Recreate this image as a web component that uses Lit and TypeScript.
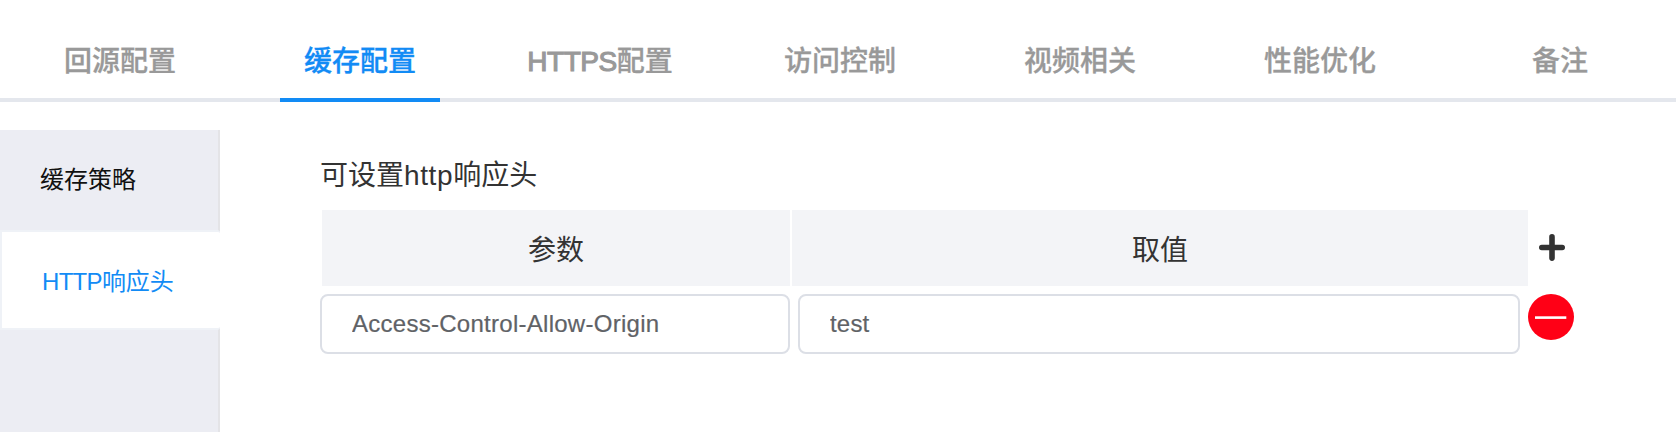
import { LitElement, html, css } from "lit";
import { customElement, state } from "lit/decorators.js";
import { classMap } from "lit/directives/class-map.js";

@customElement("app-root")
export class AppRoot extends LitElement {
  @state() private tab = 1;
  @state() private section = 1;

  private tabs = ["回源配置", "缓存配置", "HTTPS配置", "访问控制", "视频相关", "性能优化", "备注"];
  private sections = ["缓存策略", "HTTP响应头"];

  static styles = css`
    :host {
      display: block;
      height: 432px;
      overflow: hidden;
      background: #fff;
      font-family: "Liberation Sans", "Noto Sans CJK SC", sans-serif;
      color: #333;
    }
    * { box-sizing: border-box; }
    .tabs {
      display: flex;
      height: 102px;
      overflow: hidden;
      box-shadow: inset 0 -4px #e4e7ed;
    }
    .tab {
      flex: 0 0 240px;
      display: flex;
      flex-direction: column;
      align-items: center;
      padding-top: 42px;
      font-size: 28px;
      line-height: 40px;
      font-weight: 500;
      color: #999;
      white-space: nowrap;
      -webkit-text-stroke: 0.3px currentColor;
    }
    .latin { font-weight: 400; letter-spacing: -0.5px; -webkit-text-stroke: 1.1px currentColor; }
    .tab.active { color: #128bf5; }
    .tab.active::after {
      content: "";
      width: 160px;
      height: 4px;
      margin-top: 16px;
      background: #128bf5;
    }
    .body { display: flex; height: 330px; padding-top: 28px; }
    .side {
      width: 220px;
      background: linear-gradient(#e4e4e7, #e4e4e7) right / 2px 100% no-repeat #ecedf3;
    }
    .item {
      height: 100px;
      padding: 0 40px;
      font-size: 24px;
      line-height: 100px;
      color: #111;
      white-space: nowrap;
    }
    .item.active {
      border: 2px solid #eff2f7;
      border-right: 0;
      border-radius: 0 3px 3px 0;
      background: #fff;
      color: #128bf5;
    }
    .item span { letter-spacing: -0.7px; }
    .main { padding: 24px 0 0 100px; }
    .title { height: 56px; padding-top: 2px; font-size: 28px; line-height: 40px; }
    .title span { letter-spacing: 0.6px; }
    .head { display: flex; gap: 2px; padding-left: 2px; height: 76px; }
    .cell {
      background: #f3f4f7;
      text-align: center;
      font-size: 28px;
      line-height: 82px;
    }
    .name { width: 468px; }
    .value { width: 736px; }
    .row { display: flex; margin-top: 8px; }
    input {
      height: 60px;
      padding: 0 30px;
      border: 2px solid #dcdfe6;
      border-radius: 8px;
      outline: 0;
      background: #fff;
      color: #606266;
      font: 24px "Liberation Sans", sans-serif;
      -webkit-text-stroke: 0.2px currentColor;
    }
    .key { width: 470px; margin-right: 8px; letter-spacing: 0.27px; }
    .val { width: 722px; margin-right: 8px; letter-spacing: 0.2px; }
    .icon { display: block; flex: none; }
    .plus { margin: 24px 0 0 9px; }
  `;

  private label(text: string, cls = "") {
    const m = /^([A-Z]+)(.*)$/.exec(text);
    return m ? html`<span class=${cls}>${m[1]}</span>${m[2]}` : text;
  }

  render() {
    return html`
      <nav class="tabs">
        ${this.tabs.map(
          (t, i) => html`<div class=${classMap({ tab: true, active: i === this.tab })} @click=${() => (this.tab = i)}>
            <div>${this.label(t, "latin")}</div>
          </div>`
        )}
      </nav>
      <div class="body">
        <aside class="side">
          ${this.sections.map(
            (s, i) => html`<div class=${classMap({ item: true, active: i === this.section })} @click=${() => (this.section = i)}>${this.label(s)}</div>`
          )}
        </aside>
        <main class="main">
          <div class="title">可设置<span>http</span>响应头</div>
          <div class="head">
            <div class="cell name">参数</div>
            <div class="cell value">取值</div>
            <svg class="icon plus" width="27" height="27" viewBox="0 0 27 27">
              <path d="M13 2.9V24.1M2.8 13.5H23.2" fill="none" stroke="#333" stroke-width="5.6" stroke-linecap="round" />
            </svg>
          </div>
          <div class="row">
            <input class="key" .value=${"Access-Control-Allow-Origin"} />
            <input class="val" .value=${"test"} />
            <svg class="icon" width="46" height="46" viewBox="0 0 46 46">
              <circle cx="23" cy="23" r="23" fill="#ff0016" />
              <rect x="7" y="22.3" width="31.3" height="2.6" fill="#fff" />
            </svg>
          </div>
        </main>
      </div>
    `;
  }
}
